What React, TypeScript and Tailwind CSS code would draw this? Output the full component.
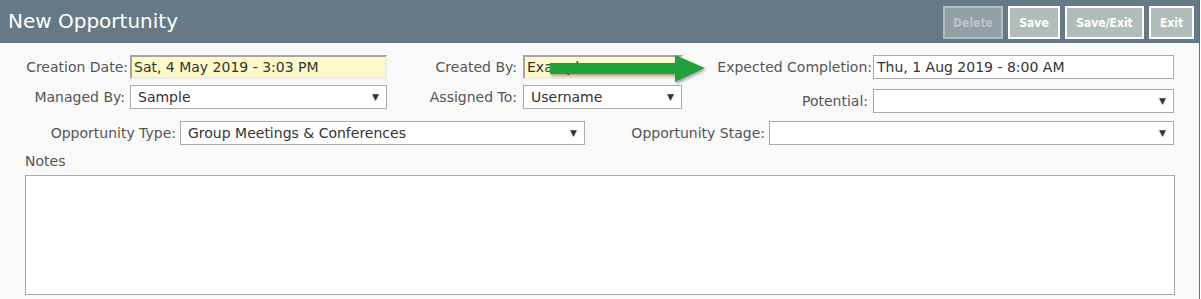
import React from 'react';

const label = "text-[14px] text-[#555] whitespace-nowrap text-right";

const Caret = () => (
  <span className="absolute right-[7px] top-1/2 -translate-y-1/2 text-[9px] text-[#333] leading-none">▼</span>
);

const Select: React.FC<{ value?: string; w: string }> = ({ value, w }) => (
  <div className={`relative h-[24px] ${w} bg-white border border-[#aaa] pl-[7px] flex items-center text-[14px] text-[#333]`}>
    {value}
    <Caret />
  </div>
);

const Btn: React.FC<{ text: string; w: string; disabled?: boolean }> = ({ text, w, disabled }) => (
  <div
    className={`h-[33px] ${w} flex items-center justify-center border-2 text-[12px] font-bold ${
      disabled ? 'bg-[#8fa0a6] border-[#b2bdc0] text-[#bcc6c8]' : 'bg-[#b1bdba] border-white text-white'
    }`}
    style={{ fontFamily: '"DejaVu Sans Condensed", "DejaVu Sans", sans-serif' }}
  >
    {text}
  </div>
);

export default function App() {
  return (
    <div className="w-[1201px] h-[299px] bg-white" style={{ fontFamily: '"DejaVu Sans", Verdana, sans-serif' }}>
      <div className="relative w-[1200px] h-[299px] bg-[#f9f9f9] border-r border-[#6b6b6b] overflow-hidden">
        {/* Header */}
        <div className="h-[43px] bg-[#657a86] flex items-center justify-between pl-[8px] pr-[5px]">
          <h1 className="text-[20px] text-white leading-none pb-[2px]">New Opportunity</h1>
          <div className="flex gap-[5px] pt-[2px]">
            <Btn text="Delete" w="w-[60px]" disabled />
            <Btn text="Save" w="w-[52px]" />
            <Btn text="Save/Exit" w="w-[79px]" />
            <Btn text="Exit" w="w-[45px]" />
          </div>
        </div>

        {/* Row 1 */}
        <div className="flex items-center mt-[12px] h-[24px]">
          <div className={`${label} w-[128px]`}>Creation Date:</div>
          <div className="ml-[2px] h-[24px] w-[257px] bg-[#fdf9c8] border-2 border-t-[#a5a5a5] border-l-[#a5a5a5] border-b-[#ececec] border-r-[#ececec] pl-[2px] flex items-center text-[14px] text-[#333]">
            Sat, 4 May 2019 - 3:03 PM
          </div>
          <div className={`${label} w-[130px]`}>Created By:</div>
          <div className="ml-[6px] h-[24px] w-[160px] bg-[#fdf9c8] border-2 border-t-[#a5a5a5] border-l-[#a5a5a5] border-b-[#ececec] border-r-[#ececec] pl-[2px] flex items-center text-[14px] text-[#333]">
            Example
          </div>
          <div className={`${label} w-[189px]`}>Expected Completion:</div>
          <div className="ml-[1px] h-[24px] w-[301px] bg-white border border-[#aaa] pl-[3px] flex items-center text-[14px] text-[#333]">
            Thu, 1 Aug 2019 - 8:00 AM
          </div>
        </div>

        {/* Row 2 */}
        <div className="flex items-start mt-[6px] h-[28px]">
          <div className={`${label} w-[125px] leading-[24px]`}>Managed By:</div>
          <div className="ml-[5px]"><Select value="Sample" w="w-[257px]" /></div>
          <div className={`${label} w-[130px] leading-[24px]`}>Assigned To:</div>
          <div className="ml-[6px]"><Select value="Username" w="w-[159px]" /></div>
          <div className={`${label} w-[186px] mt-[4px] leading-[24px]`}>Potential:</div>
          <div className="ml-[5px] mt-[4px]"><Select w="w-[301px]" /></div>
        </div>

        {/* Row 3 */}
        <div className="flex items-center mt-[8px] h-[24px]">
          <div className={`${label} w-[176px]`}>Opportunity Type:</div>
          <div className="ml-[4px]"><Select value="Group Meetings & Conferences" w="w-[405px]" /></div>
          <div className={`${label} w-[180px]`}>Opportunity Stage:</div>
          <div className="ml-[4px]"><Select w="w-[405px]" /></div>
        </div>

        {/* Notes */}
        <div className="pl-[25px] mt-[6px] text-[14px] text-[#555] leading-[20px]">Notes</div>
        <div className="ml-[25px] mt-[4px] w-[1150px] h-[120px] bg-white border border-[#aaa]" />

        {/* Green arrow */}
        <svg className="absolute left-[546px] top-[51px]" width="170" height="36" viewBox="0 0 170 36">
          <defs>
            <filter id="sh" x="-10%" y="-30%" width="120%" height="160%">
              <feDropShadow dx="1" dy="2" stdDeviation="1.5" floodColor="#000" floodOpacity="0.35" />
            </filter>
          </defs>
          <path d="M4 12 L129 12 L129 4 L159 17 L129 31 L129 23 L4 23 Z" fill="#21a03a" filter="url(#sh)" />
        </svg>
      </div>
    </div>
  );
}
